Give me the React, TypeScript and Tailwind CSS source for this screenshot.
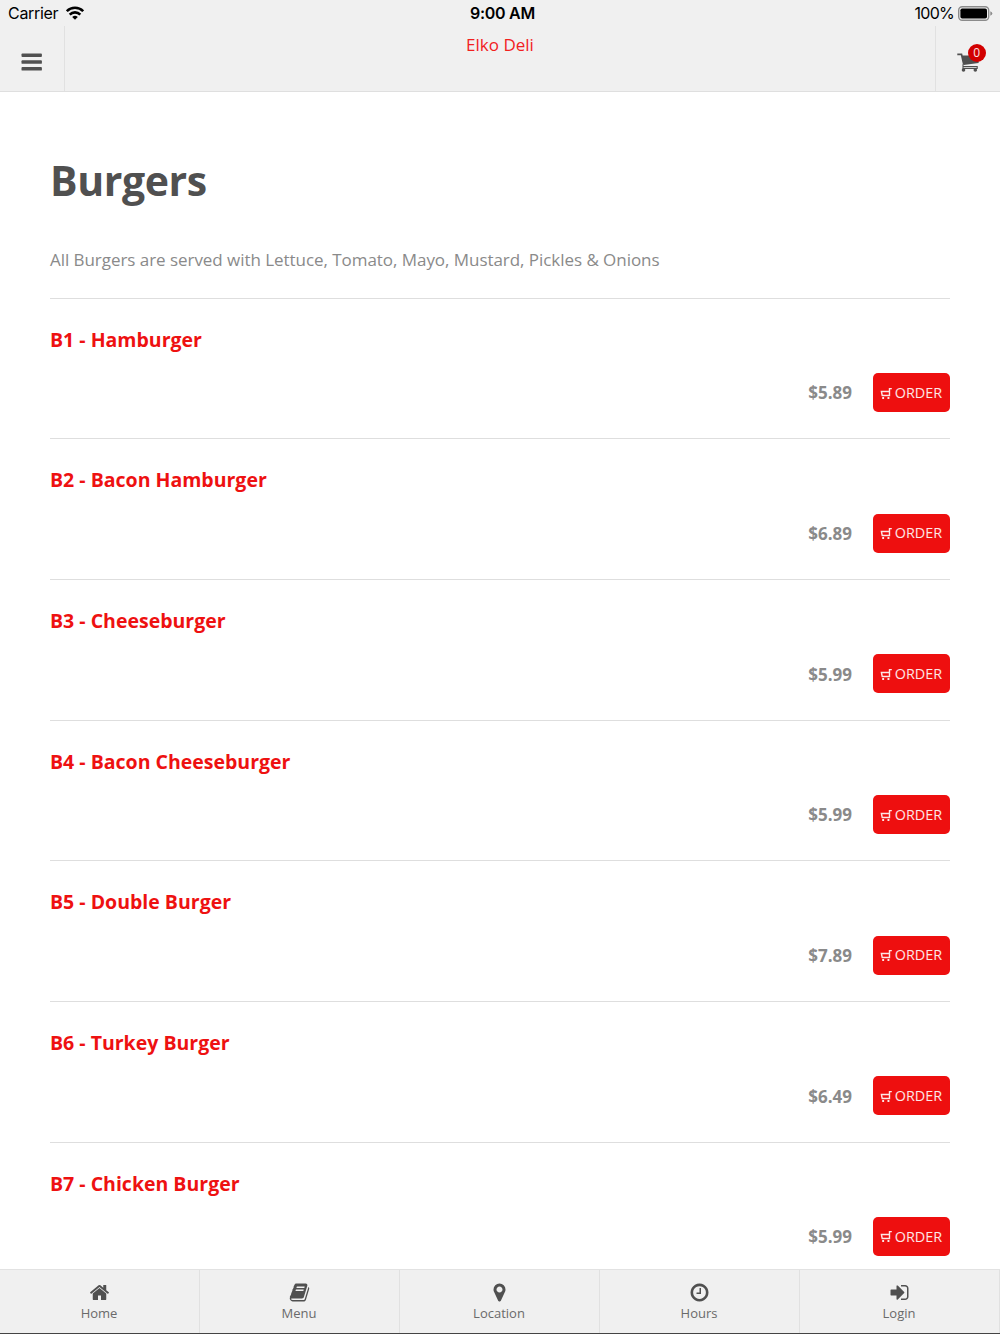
interface MenuItem {
  name: string;
  price: string;
}

const items: MenuItem[] = [
  { name: 'B1 - Hamburger', price: '$5.89' },
  { name: 'B2 - Bacon Hamburger', price: '$6.89' },
  { name: 'B3 - Cheeseburger', price: '$5.99' },
  { name: 'B4 - Bacon Cheeseburger', price: '$5.99' },
  { name: 'B5 - Double Burger', price: '$7.89' },
  { name: 'B6 - Turkey Burger', price: '$6.49' },
  { name: 'B7 - Chicken Burger', price: '$5.99' },
];

const tabs = [
  {
    label: 'Home',
    path: 'M1472 992v480q0 26-19 45t-45 19h-384v-384h-256v384h-384q-26 0-45-19t-19-45v-480q0-1 .5-3t.5-3l575-474 575 474q1 2 1 6zm223-69l-62 74q-8 9-21 11h-3q-13 0-21-7l-692-577-692 577q-12 8-24 7-13-2-21-11l-62-74q-8-10-7-23.5t11-21.5l719-599q32-26 76-26t76 26l244 204v-195q0-14 9-23t23-9h192q14 0 23 9t9 23v408l219 182q10 8 11 21.5t-7 23.5z',
  },
  {
    label: 'Menu',
    path: 'M1703 478q40 57 18 129l-275 906q-19 64-76.5 107.5t-122.5 43.5h-923q-77 0-148.5-53.5t-99.5-131.5q-24-67-2-127 0-4 3-27t4-37q1-8-3-21.5t-3-19.5q2-11 8-21t16.5-23.5 16.5-23.5q23-38 45-91.5t30-91.5q3-10 .5-30t-.5-28q3-11 17-28t17-23q21-36 42-92t25-90q1-9-2.5-32t.5-28q4-13 22-30.5t22-22.5q19-26 42.5-84.5t27.5-96.5q1-8-3-25.5t-2-26.5q2-8 9-18t18-23 17-21q8-12 16.5-30.5t15-35 16-36 19.5-32 26.5-23.5 36-11.5 47.5 5.5l-1 3q38-9 51-9h761q74 0 114 56t18 130l-274 906q-36 119-71.5 153.5t-128.5 34.5h-869q-27 0-38 15-11 16-1 43 24 70 144 70h923q29 0 56-15.5t35-41.5l300-987q7-22 5-57 38 15 59 43zm-1064 2q-4 13 2 22.5t20 9.5h608q13 0 25.5-9.5t16.5-22.5l21-64q4-13-2-22.5t-20-9.5h-608q-13 0-25.5 9.5t-16.5 22.5zm-83 256q-4 13 2 22.5t20 9.5h608q13 0 25.5-9.5t16.5-22.5l21-64q4-13-2-22.5t-20-9.5h-608q-13 0-25.5 9.5t-16.5 22.5z',
  },
  {
    label: 'Location',
    path: 'M1152 640q0-106-75-181t-181-75-181 75-75 181 75 181 181 75 181-75 75-181zm256 0q0 109-33 179l-364 774q-16 33-47.5 52t-67.5 19-67.5-19-46.5-52l-365-774q-33-70-33-179 0-212 150-362t362-150 362 150 150 362z',
  },
  {
    label: 'Hours',
    path: 'M1024 544v448q0 14-9 23t-23 9h-320q-14 0-23-9t-9-23v-64q0-14 9-23t23-9h224v-352q0-14 9-23t23-9h64q14 0 23 9t9 23zm416 352q0-148-73-273t-198-198-273-73-273 73-198 198-73 273 73 273 198 198 273 73 273-73 198-198 73-273zm224 0q0 209-103 385.5t-279.5 279.5-385.5 103-385.5-103-279.5-279.5-103-385.5 103-385.5 279.5-279.5 385.5-103 385.5 103 279.5 279.5 103 385.5z',
  },
  {
    label: 'Login',
    path: 'M1312 896q0 26-19 45l-544 544q-19 19-45 19t-45-19-19-45v-288h-448q-26 0-45-19t-19-45v-384q0-26 19-45t45-19h448v-288q0-26 19-45t45-19 45 19l544 544q19 19 19 45zm352-352v704q0 119-84.5 203.5t-203.5 84.5h-320q-13 0-22.5-9.5t-9.5-22.5q0-4-1-20t-.5-26.5 3-23.5 10-19.5 20.5-6.5h320q66 0 113-47t47-113v-704q0-66-47-113t-113-47h-312l-11.5-1-11.5-3-8-5.5-7-9-2-13.5q0-4-1-20t-.5-26.5 3-23.5 10-19.5 20.5-6.5h320q119 0 203.5 84.5t84.5 203.5z',
  },
];

function WifiIcon() {
  return (
    <svg className="ml-2 h-[14px] w-[18px]" viewBox="0 0 18 14" fill="none" stroke="#000" strokeWidth="2.6">
      <path d="M.8 5.2a11.6 11.6 0 0 1 16.4 0" />
      <path d="M3.7 8.6a7.5 7.5 0 0 1 10.6 0" />
      <path d="M9 13.8 6.2 11a4 4 0 0 1 5.6 0z" fill="#000" stroke="none" />
    </svg>
  );
}

function StatusBar() {
  return (
    <div className="grid h-[26px] grid-cols-3 items-center text-black">
      <div className="flex items-center pl-2">
        <span className="text-[16px] tracking-[-0.3px]">Carrier</span>
        <WifiIcon />
      </div>
      <div className="pl-[5px] text-center text-[16px] font-semibold tracking-[-0.3px]">9:00 AM</div>
      <div className="flex items-center justify-end pr-[7px]">
        <span className="text-[16px] tracking-[-0.75px]">100%</span>
        <svg className="ml-1 h-[15px] w-[35px]" viewBox="0 0 35 15">
          <rect x=".7" y=".7" width="30" height="13.6" rx="3.5" fill="none" stroke="#8b8b8b" strokeWidth="1.4" />
          <rect x="2.4" y="2.4" width="26.6" height="10.2" rx="1.8" />
          <path d="M32.3 5.2q2 .7 2 2.3t-2 2.3z" fill="#8b8b8b" />
        </svg>
      </div>
    </div>
  );
}

function Header() {
  return (
    <header className="h-[92px] shrink-0 border-b border-[#dfdfdf] bg-[#f0f0f0] font-[Inter,sans-serif]">
      <StatusBar />
      <div className="flex h-[65px] font-['Open_Sans',sans-serif]">
        <button type="button" className="flex w-[65px] items-center border-r border-[#e1e1e1] pl-[21px] pt-[6px]">
          <svg className="h-[18px] w-[21px]" viewBox="0 0 21 18" fill="#505050">
            <rect x=".5" y=".5" width="20.4" height="3.5" rx=".9" />
            <rect x=".5" y="7.3" width="20.4" height="3.5" rx=".9" />
            <rect x=".5" y="14.1" width="20.4" height="3.5" rx=".9" />
          </svg>
        </button>
        <h2 className="flex-1 pt-[7px] text-center text-[17px] leading-6 text-[#f2201f]">Elko Deli</h2>
        <button type="button" className="relative w-[65px] border-l border-[#e1e1e1] pl-[21px]">
          <svg className="mt-[7px] h-[20px] w-[22px]" viewBox="0 0 22 20">
            <path d="M.3 2.3h4.2l2.3 10.2" fill="none" stroke="#505050" strokeWidth="1.7" />
            <path d="M4.8 3.6h16.8v7.4L6.6 13z" fill="#505050" />
            <path d="M6 12.2v4.2h14.2v-1.9H6" fill="none" stroke="#505050" strokeWidth="1.1" />
            <circle cx="6.5" cy="18" r="1.8" fill="#505050" />
            <circle cx="18.3" cy="18" r="1.8" fill="#505050" />
          </svg>
          <span className="absolute right-[14.5px] top-[18px] flex size-[17.5px] items-center justify-center rounded-full bg-[#d20000] text-[12px] leading-none text-white/90">
            0
          </span>
        </button>
      </div>
    </header>
  );
}

function OrderButton() {
  return (
    <button
      type="button"
      className="flex h-[39px] w-[77px] items-center justify-center rounded-[5px] bg-[#ee0f0f] pr-px text-[14.4px] text-white/90"
    >
      <svg className="mr-[3px] h-[12px] w-[12px]" viewBox="0 0 12 12" fill="none" stroke="currentColor" strokeWidth="1.4">
        <path d="M11.8 1.6H9.5v6.9H2.2L1.4 4.5h8.1" />
        <path d="M2.2 10.1h1.9v1.8H2.2zM7.5 10.1h1.9v1.8H7.5z" fill="currentColor" stroke="none" />
      </svg>
      ORDER
    </button>
  );
}

export default function App() {
  return (
    <div className="flex h-[1334px] w-[1000px] flex-col overflow-hidden bg-white font-['Open_Sans',sans-serif]">
      <Header />
      <main className="min-h-0 flex-1 overflow-hidden px-[50px]">
        <h1 className="mt-[58px] text-[41px] font-bold leading-[60px] tracking-[-0.4px] text-[#505050]">Burgers</h1>
        <p className="mt-[38px] text-[17px] leading-6 tracking-[-0.047px] text-[#8a8a8a]">
          All Burgers are served with Lettuce, Tomato, Mayo, Mustard, Pickles &amp; Onions
        </p>
        <ul className="mt-[25.8px]">
          {items.map(item => (
            <li key={item.name} className="h-[140.65px] border-t border-[#dedede]">
              <h3 className="pt-[27px] text-[19.5px] font-bold leading-7 text-[#ee1111]">{item.name}</h3>
              <div className="mt-[19.3px] flex items-center justify-end gap-[21px]">
                <span className="pt-px text-[17px] font-bold text-[#8a8a8a]">{item.price}</span>
                <OrderButton />
              </div>
            </li>
          ))}
        </ul>
      </main>
      <nav className="flex h-[65px] shrink-0 border-b border-t border-b-[#444] border-t-[#e2e2e2] bg-[#f0f0f0]">
        {tabs.map(tab => (
          <a key={tab.label} className="flex flex-1 flex-col items-center border-r border-[#e1e1e1] pr-px pt-[12px]">
            <svg className="size-[21px]" viewBox="0 0 1792 1792" fill="#505050">
              <path d={tab.path} />
            </svg>
            <span className="text-[13px] leading-[20px] text-[#6a6a6a]">{tab.label}</span>
          </a>
        ))}
      </nav>
    </div>
  );
}
